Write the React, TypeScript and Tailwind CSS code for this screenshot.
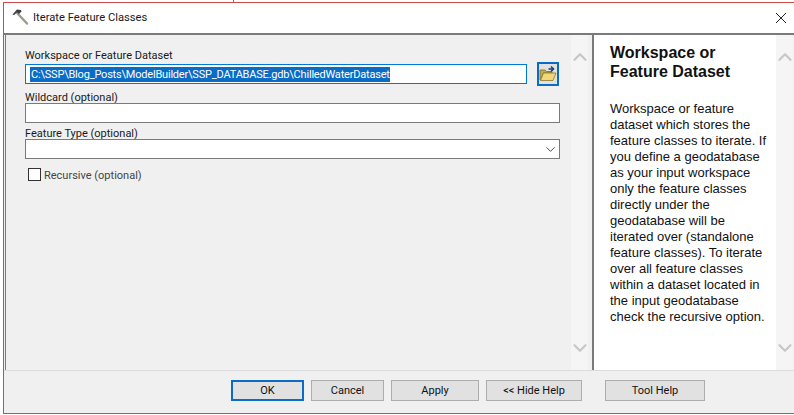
import { ChevronDown, ChevronUp } from "lucide-react";

const labelClass = "text-[11px] leading-[14px] text-[#1a1a1a] font-['Roboto',sans-serif]";
const buttonClass =
  "h-[21px] bg-[#e1e1e1] border border-[#adadad] text-[11px] leading-[19px] text-[#111] text-center font-['Roboto',sans-serif]";

function HammerIcon() {
  return (
    <svg width="20" height="20" viewBox="0 0 20 20" className="shrink-0">
      <path d="M5.5 5.5 L15 15.5" stroke="#9a9a8e" strokeWidth="2.5" strokeLinecap="round" />
      <path d="M0.5 6.5 L5 1.5 L9 2 L9.5 3.5 L7 6 L5 4.5 L2 7 Z" fill="#3f3f3f" />
    </svg>
  );
}

function FolderIcon() {
  return (
    <svg width="18" height="18" viewBox="0 0 18 18">
      <path d="M1 15 V5 H6 L7.5 6.5 H13 V8 H4.5 L1.5 15 Z" fill="#c9a94a" stroke="#7a6a2e" strokeWidth="0.8" />
      <path d="M1.5 15.5 L4.5 8 H17 L14 15.5 Z" fill="#f0d777" stroke="#8c7630" strokeWidth="0.8" />
      <path d="M9.5 4 H14 M12 1.5 L14.5 4 L12 6.5" fill="none" stroke="#1f3f6e" strokeWidth="1.5" />
    </svg>
  );
}

function Scrollbar() {
  return (
    <div className="w-[17px] shrink-0 bg-[#f5f5f5] flex flex-col justify-between pt-[11px] pb-[11px] items-center">
      <ChevronUp size={22} strokeWidth={2.5} className="shrink-0 text-[#c8c8c8]" />
      <ChevronDown size={22} strokeWidth={2.5} className="shrink-0 text-[#c8c8c8]" />
    </div>
  );
}

export default function App() {
  return (
    <div className="w-[794px] h-[415px] bg-white overflow-hidden flex flex-col pb-[1px]">
      <div className="h-[2px] shrink-0 pl-[233px]">
        <div className="w-[1px] h-full bg-[#777]" />
      </div>
      <div className="flex-1 ml-[3px] flex flex-col border-l border-t border-b border-[#d04848] bg-[#f0f0f0]">
        <div className="h-[30px] shrink-0 bg-white flex items-center pl-[8px] pr-[6px] gap-[1px]">
          <HammerIcon />
          <span className="text-[11.2px] leading-[14px] text-[#1a1a1a] font-['Roboto',sans-serif]">Iterate Feature Classes</span>
          <svg width="12" height="12" viewBox="0 0 12 12" className="ml-auto mr-[1px]">
            <path d="M1 1 L11 11 M11 1 L1 11" stroke="#222" strokeWidth="1" />
          </svg>
        </div>

        <div className="h-[337px] shrink-0 flex border-t-2 border-[#7a7a7a]">
          <div className="w-[1px] shrink-0" />
          <div className="w-[1px] shrink-0 bg-[#7a7a7a]" />
          <div className="w-[565px] shrink-0 pl-[19px] pr-[11px] pt-[14px] flex flex-col">
            <span className={labelClass}>Workspace or Feature Dataset</span>
            <div className="flex items-center mt-[-1px]">
              <div className="w-[502px] h-[20px] bg-white border border-[#0078d7] pl-[4px] flex items-center">
                <span className="bg-[#0a6cc4] pl-[1px] text-white text-[11px] tracking-[-0.2px] leading-[15px] font-['Roboto',sans-serif]">
                  C:\SSP\Blog_Posts\ModelBuilder\SSP_DATABASE.gdb\ChilledWaterDataset
                </span>
              </div>
              <div className="w-[22px] h-[24px] ml-[10px] border-2 border-[#0a6cc4] bg-[#e1e1e1] flex items-center justify-center">
                <FolderIcon />
              </div>
            </div>
            <span className={`${labelClass} mt-[5px]`}>Wildcard (optional)</span>
            <div className="h-[20px] mt-[-2px] bg-white border border-[#7a7a7a]" />
            <span className={`${labelClass} mt-[4px]`}>Feature Type (optional)</span>
            <div className="h-[20px] mt-[-2px] bg-white border border-[#7a7a7a] flex items-center justify-end pr-[1px]">
              <ChevronDown size={15} strokeWidth={1.4} className="text-[#333]" />
            </div>
            <div className="flex items-start ml-[3px] mt-[9px] gap-[3px]">
              <div className="w-[13px] h-[13px] bg-white border border-[#333]" />
              <span className="mt-[1px] text-[11px] leading-[14px] text-[#444] font-['Roboto',sans-serif]">Recursive (optional)</span>
            </div>
          </div>
          <Scrollbar />
          <div className="w-[4px] shrink-0" />
          <div className="w-[2px] shrink-0 bg-[#7a7a7a]" />
          <div className="w-[182px] shrink-0 bg-white pl-[16px] pt-[8px] font-['Liberation_Sans',sans-serif] text-[#111]">
            <h1 className="text-[16px] leading-[19px] font-bold w-[150px]">Workspace or Feature Dataset</h1>
            <p className="mt-[20px] text-[13px] leading-[16px] w-[160px]">
              Workspace or feature dataset which stores the feature classes to iterate. If you define a geodatabase as your input workspace only the feature classes directly under the geodatabase will be iterated over (standalone feature classes). To iterate over all feature classes within a dataset located in the input geodatabase check the recursive option.
            </p>
          </div>
          <Scrollbar />
        </div>

        <div className="flex-1 border-t border-[#dcdcdc] flex pt-[9px] pl-[227px]">
          <div className={`${buttonClass} w-[73px] !border-2 !border-[#0a6cc4] !leading-[17px]`}>OK</div>
          <div className={`${buttonClass} w-[73px] ml-[7px]`}>Cancel</div>
          <div className={`${buttonClass} w-[88px] ml-[7px]`}>Apply</div>
          <div className={`${buttonClass} w-[96px] ml-[7px]`}>{"<< Hide Help"}</div>
          <div className={`${buttonClass} w-[100px] ml-[23px]`}>Tool Help</div>
        </div>
      </div>
    </div>
  );
}
